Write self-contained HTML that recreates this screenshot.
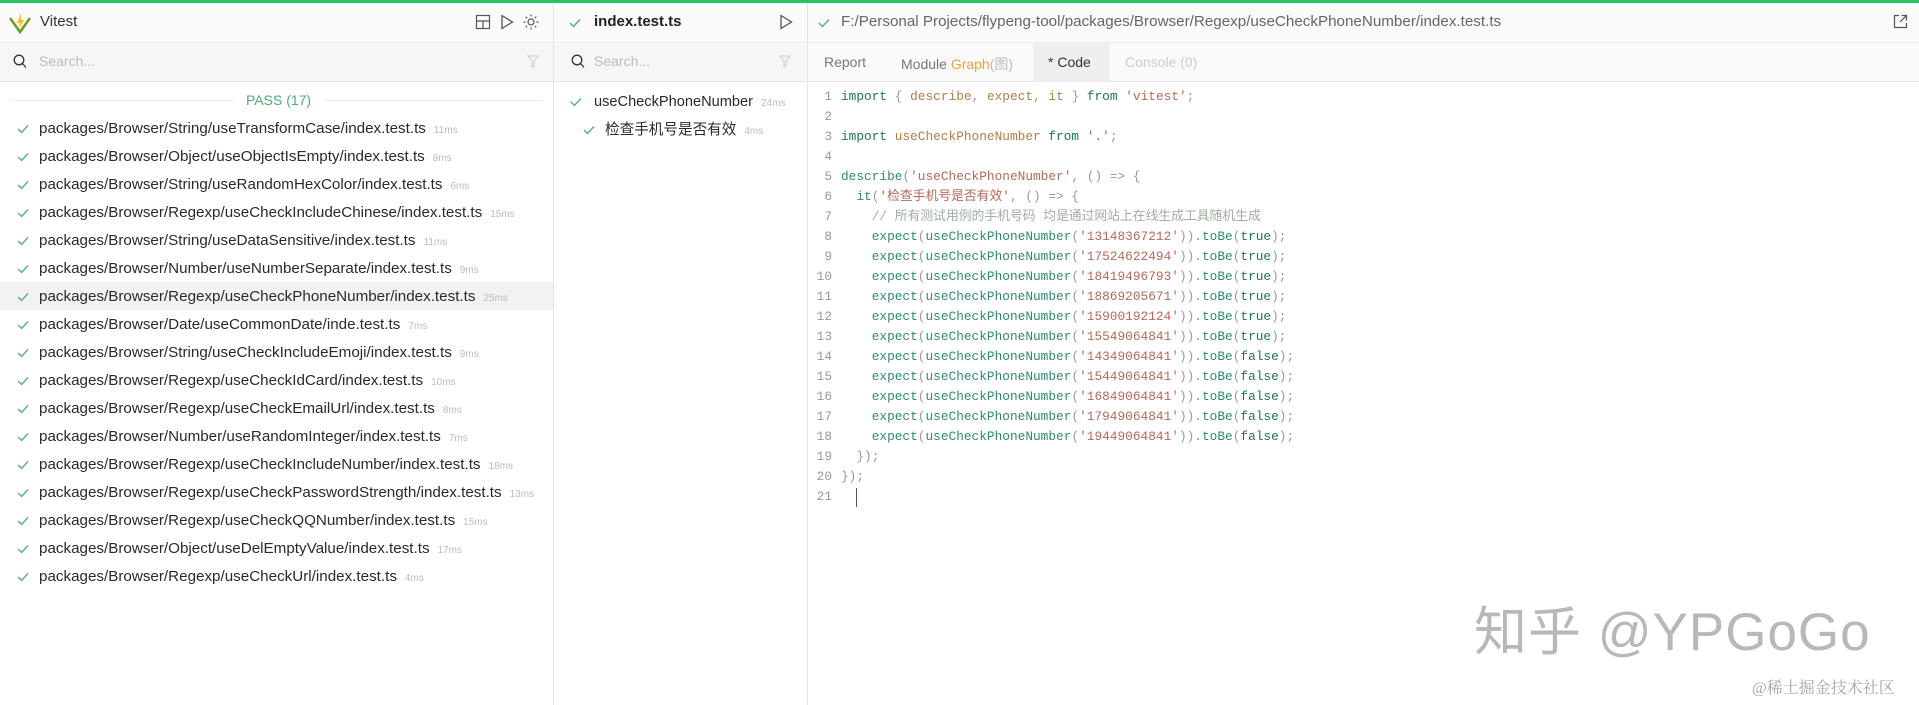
<!DOCTYPE html>
<html><head><meta charset="utf-8"><style>
*{box-sizing:border-box;margin:0;padding:0}
body{width:1919px;height:705px;overflow:hidden;background:#fff;font-family:"Liberation Sans","Noto Sans CJK SC",sans-serif;color:#333;position:relative}
.a{position:absolute;white-space:nowrap}
.top{left:0;top:0;width:1919px;height:3px;background:#22c55e}
.hdr{top:3px;height:40px;background:#fafafa;border-bottom:1px solid #eee}
.srch{top:43px;height:39px;background:#f6f6f6;border-bottom:1px solid #e4e4e4}
.vl{width:1px;background:#e4e4e4;top:3px;height:702px}
.row{font-size:15.2px;color:#2a2a2a}
.ms{font-size:10px;color:#bbb;margin-left:8px}
.code{font-family:"Liberation Mono","Noto Sans CJK SC",monospace;font-size:12.8px;color:#393a34}
.k{color:#1e754f}.f{color:#2f8a73}.s{color:#b56959}.p{color:#999}.c{color:#a0ada0}
.list>div{height:28px;line-height:28px;position:relative;padding-left:39px;overflow:hidden}
.cks{position:absolute;left:17px;top:9px}
</style></head><body>
<svg width="0" height="0" style="position:absolute"><defs><symbol id="ck" viewBox="0 0 12 10"><path d="M1 5 L4.5 8.5 L11 1.5" fill="none" stroke="#4caf72" stroke-width="1.3"/></symbol></defs></svg>
<div class="a top"></div>
<div class="a hdr" style="left:0;width:1919px"></div>
<div class="a srch" style="left:0;width:807px"></div>
<div class="a srch" style="left:807px;width:1112px;background:#fafafa"></div>
<div class="a" style="left:1033px;top:43px;width:77px;height:39px;background:#efefef"></div>
<div class="a vl" style="left:553px"></div>
<div class="a vl" style="left:807px"></div>

<svg class="a" style="left:9px;top:12px" width="22" height="22" viewBox="0 0 22 22"><path d="M1 6 L11 20 L21 6" fill="none" stroke="#6c9a2a" stroke-width="2.5"/><path d="M12 1 L8 11 H11 L10 17 L15 8 H12 Z" fill="#fbbf24"/></svg>
<div class="a" style="left:40px;top:13px;font-size:15px;color:#333">Vitest</div>
<svg class="a" style="left:475px;top:14px" width="16" height="16" viewBox="0 0 16 16" fill="none" stroke="#555" stroke-width="1.2"><rect x="1.5" y="1.5" width="13" height="13"/><path d="M1.5 7h13M8 7v7.5"/></svg>
<svg class="a" style="left:500px;top:14px" width="14" height="16" viewBox="0 0 14 16"><path d="M2 1.5 L12.5 8 L2 14.5 Z" fill="none" stroke="#555" stroke-width="1.3"/></svg>
<svg class="a" style="left:523px;top:14px" width="16" height="16" viewBox="0 0 16 16" stroke="#555" stroke-width="1.2" fill="none"><circle cx="8" cy="8" r="3"/><path d="M8 0.5v2M8 13.5v2M0.5 8h2M13.5 8h2M2.7 2.7l1.4 1.4M11.9 11.9l1.4 1.4M2.7 13.3l1.4-1.4M11.9 4.1l1.4-1.4"/></svg>
<svg class="a" style="left:569px;top:18px" width="12" height="10"><use href="#ck"/></svg>
<div class="a" style="left:594px;top:13px;font-size:15px;font-weight:bold;color:#222">index.test.ts</div>
<svg class="a" style="left:779px;top:14px" width="14" height="16" viewBox="0 0 14 16"><path d="M2 1.5 L12.5 8 L2 14.5 Z" fill="none" stroke="#555" stroke-width="1.3"/></svg>
<svg class="a" style="left:818px;top:18px" width="12" height="10"><use href="#ck"/></svg>
<div class="a" style="left:841px;top:13px;font-size:15.2px;color:#666">F:/Personal Projects/flypeng-tool/packages/Browser/Regexp/useCheckPhoneNumber/index.test.ts</div>
<svg class="a" style="left:1893px;top:14px" width="15" height="15" viewBox="0 0 15 15" fill="none" stroke="#555" stroke-width="1.2"><path d="M6 1.5H1.5v12h12V9M8.5 1.5h5v5M13.5 1.5L7 8"/></svg>

<svg class="a" style="left:13px;top:54px" width="14" height="15" viewBox="0 0 14 15" fill="none" stroke="#333" stroke-width="1.3"><circle cx="6" cy="6" r="4.8"/><path d="M9.5 9.5l3.5 4"/></svg>
<div class="a" style="left:39px;top:53px;font-size:14px;color:#bbb">Search...</div>
<svg class="a" style="left:527px;top:55px" width="14" height="13" viewBox="0 0 14 13" fill="none" stroke="#ccc"><path d="M1 1h10L7 6v5L5 12V6Z"/></svg>
<svg class="a" style="left:571px;top:54px" width="14" height="15" viewBox="0 0 14 15" fill="none" stroke="#333" stroke-width="1.3"><circle cx="6" cy="6" r="4.8"/><path d="M9.5 9.5l3.5 4"/></svg>
<div class="a" style="left:594px;top:53px;font-size:14px;color:#bbb">Search...</div>
<svg class="a" style="left:779px;top:55px" width="14" height="13" viewBox="0 0 14 13" fill="none" stroke="#ccc"><path d="M1 1h10L7 6v5L5 12V6Z"/></svg>

<div class="a" style="left:824px;top:54px;font-size:14px;color:#777">Report</div>
<div class="a" style="left:901px;top:54px;font-size:14px;color:#777">Module <span style="color:#f0a040">Graph</span><span style="color:#bbb">(图)</span></div>
<div class="a" style="left:1048px;top:54px;font-size:14px;color:#333">* Code</div>
<div class="a" style="left:1125px;top:54px;font-size:14px;color:#ccc">Console (0)</div>

<div class="a" style="left:10px;top:100px;width:225px;height:1px;background:#eee"></div>
<div class="a" style="left:323px;top:100px;width:220px;height:1px;background:#eee"></div>
<div class="a" style="left:246px;top:92px;font-size:14px;color:#4caf72">PASS (17)</div>

<div class="a" style="left:0;top:282px;width:553px;height:28px;background:#f2f2f2"></div>
<div class="a list" style="left:0;top:115px;width:553px">
<div><svg class="cks" width="12" height="10"><use href="#ck"/></svg><span class="row">packages/Browser/String/useTransformCase/index.test.ts</span><span class="ms">11ms</span></div>
<div><svg class="cks" width="12" height="10"><use href="#ck"/></svg><span class="row">packages/Browser/Object/useObjectIsEmpty/index.test.ts</span><span class="ms">8ms</span></div>
<div><svg class="cks" width="12" height="10"><use href="#ck"/></svg><span class="row">packages/Browser/String/useRandomHexColor/index.test.ts</span><span class="ms">6ms</span></div>
<div><svg class="cks" width="12" height="10"><use href="#ck"/></svg><span class="row">packages/Browser/Regexp/useCheckIncludeChinese/index.test.ts</span><span class="ms">15ms</span></div>
<div><svg class="cks" width="12" height="10"><use href="#ck"/></svg><span class="row">packages/Browser/String/useDataSensitive/index.test.ts</span><span class="ms">11ms</span></div>
<div><svg class="cks" width="12" height="10"><use href="#ck"/></svg><span class="row">packages/Browser/Number/useNumberSeparate/index.test.ts</span><span class="ms">9ms</span></div>
<div><svg class="cks" width="12" height="10"><use href="#ck"/></svg><span class="row">packages/Browser/Regexp/useCheckPhoneNumber/index.test.ts</span><span class="ms">25ms</span></div>
<div><svg class="cks" width="12" height="10"><use href="#ck"/></svg><span class="row">packages/Browser/Date/useCommonDate/inde.test.ts</span><span class="ms">7ms</span></div>
<div><svg class="cks" width="12" height="10"><use href="#ck"/></svg><span class="row">packages/Browser/String/useCheckIncludeEmoji/index.test.ts</span><span class="ms">9ms</span></div>
<div><svg class="cks" width="12" height="10"><use href="#ck"/></svg><span class="row">packages/Browser/Regexp/useCheckIdCard/index.test.ts</span><span class="ms">10ms</span></div>
<div><svg class="cks" width="12" height="10"><use href="#ck"/></svg><span class="row">packages/Browser/Regexp/useCheckEmailUrl/index.test.ts</span><span class="ms">8ms</span></div>
<div><svg class="cks" width="12" height="10"><use href="#ck"/></svg><span class="row">packages/Browser/Number/useRandomInteger/index.test.ts</span><span class="ms">7ms</span></div>
<div><svg class="cks" width="12" height="10"><use href="#ck"/></svg><span class="row">packages/Browser/Regexp/useCheckIncludeNumber/index.test.ts</span><span class="ms">18ms</span></div>
<div><svg class="cks" width="12" height="10"><use href="#ck"/></svg><span class="row">packages/Browser/Regexp/useCheckPasswordStrength/index.test.ts</span><span class="ms">13ms</span></div>
<div><svg class="cks" width="12" height="10"><use href="#ck"/></svg><span class="row">packages/Browser/Regexp/useCheckQQNumber/index.test.ts</span><span class="ms">15ms</span></div>
<div><svg class="cks" width="12" height="10"><use href="#ck"/></svg><span class="row">packages/Browser/Object/useDelEmptyValue/index.test.ts</span><span class="ms">17ms</span></div>
<div><svg class="cks" width="12" height="10"><use href="#ck"/></svg><span class="row">packages/Browser/Regexp/useCheckUrl/index.test.ts</span><span class="ms">4ms</span></div>
</div>

<div class="a list" style="left:553px;top:88px;width:254px">
<div style="padding-left:41px"><svg class="cks" style="left:17px" width="12" height="10"><use href="#ck"/></svg><span class="row" style="font-size:14.6px">useCheckPhoneNumber</span><span class="ms">24ms</span></div>
<div style="padding-left:52px"><svg class="cks" style="left:30px" width="12" height="10"><use href="#ck"/></svg><span class="row" style="font-size:14.6px">检查手机号是否有效</span><span class="ms">4ms</span></div>
</div>

<div class="a code" style="left:0;top:87px;line-height:20px">
<div style="position:absolute;left:792px;width:40px;text-align:right;color:#999">1<br>2<br>3<br>4<br>5<br>6<br>7<br>8<br>9<br>10<br>11<br>12<br>13<br>14<br>15<br>16<br>17<br>18<br>19<br>20<br>21</div>
<div style="position:absolute;left:841px;white-space:pre"><span class="k">import</span> <span class="p">{</span> <span style="color:#b07d48">describe</span><span class="p">,</span> <span style="color:#b07d48">expect</span><span class="p">,</span> <span style="color:#b07d48">it</span> <span class="p">}</span> <span class="k">from</span> <span class="s">'vitest'</span><span class="p">;</span>

<span class="k">import</span> <span style="color:#b07d48">useCheckPhoneNumber</span> <span class="k">from</span> <span class="s">'.'</span><span class="p">;</span>

<span class="f">describe</span><span class="p">(</span><span class="s">'useCheckPhoneNumber'</span><span class="p">, () =&gt; {</span>
  <span class="f">it</span><span class="p">(</span><span class="s">'检查手机号是否有效'</span><span class="p">, () =&gt; {</span>
    <span class="c">// 所有测试用例的手机号码 均是通过网站上在线生成工具随机生成</span>
    <span class="f">expect</span><span class="p">(</span><span class="f">useCheckPhoneNumber</span><span class="p">(</span><span class="s">'13148367212'</span><span class="p">)).</span><span class="f">toBe</span><span class="p">(</span><span class="k">true</span><span class="p">);</span>
    <span class="f">expect</span><span class="p">(</span><span class="f">useCheckPhoneNumber</span><span class="p">(</span><span class="s">'17524622494'</span><span class="p">)).</span><span class="f">toBe</span><span class="p">(</span><span class="k">true</span><span class="p">);</span>
    <span class="f">expect</span><span class="p">(</span><span class="f">useCheckPhoneNumber</span><span class="p">(</span><span class="s">'18419496793'</span><span class="p">)).</span><span class="f">toBe</span><span class="p">(</span><span class="k">true</span><span class="p">);</span>
    <span class="f">expect</span><span class="p">(</span><span class="f">useCheckPhoneNumber</span><span class="p">(</span><span class="s">'18869205671'</span><span class="p">)).</span><span class="f">toBe</span><span class="p">(</span><span class="k">true</span><span class="p">);</span>
    <span class="f">expect</span><span class="p">(</span><span class="f">useCheckPhoneNumber</span><span class="p">(</span><span class="s">'15900192124'</span><span class="p">)).</span><span class="f">toBe</span><span class="p">(</span><span class="k">true</span><span class="p">);</span>
    <span class="f">expect</span><span class="p">(</span><span class="f">useCheckPhoneNumber</span><span class="p">(</span><span class="s">'15549064841'</span><span class="p">)).</span><span class="f">toBe</span><span class="p">(</span><span class="k">true</span><span class="p">);</span>
    <span class="f">expect</span><span class="p">(</span><span class="f">useCheckPhoneNumber</span><span class="p">(</span><span class="s">'14349064841'</span><span class="p">)).</span><span class="f">toBe</span><span class="p">(</span><span class="k">false</span><span class="p">);</span>
    <span class="f">expect</span><span class="p">(</span><span class="f">useCheckPhoneNumber</span><span class="p">(</span><span class="s">'15449064841'</span><span class="p">)).</span><span class="f">toBe</span><span class="p">(</span><span class="k">false</span><span class="p">);</span>
    <span class="f">expect</span><span class="p">(</span><span class="f">useCheckPhoneNumber</span><span class="p">(</span><span class="s">'16849064841'</span><span class="p">)).</span><span class="f">toBe</span><span class="p">(</span><span class="k">false</span><span class="p">);</span>
    <span class="f">expect</span><span class="p">(</span><span class="f">useCheckPhoneNumber</span><span class="p">(</span><span class="s">'17949064841'</span><span class="p">)).</span><span class="f">toBe</span><span class="p">(</span><span class="k">false</span><span class="p">);</span>
    <span class="f">expect</span><span class="p">(</span><span class="f">useCheckPhoneNumber</span><span class="p">(</span><span class="s">'19449064841'</span><span class="p">)).</span><span class="f">toBe</span><span class="p">(</span><span class="k">false</span><span class="p">);</span>
  <span class="p">});</span>
<span class="p">});</span>
</div></div>
<div class="a" style="left:856px;top:488px;width:1px;height:19px;background:#555"></div>

<div class="a" style="left:1474px;top:590px;font-size:53px;color:#b8b8b8;letter-spacing:1px">知乎 @YPGoGo</div>
<div class="a" style="left:1752px;top:675px;font-size:16px;color:#a5a5a5;font-family:'Liberation Serif','Noto Serif CJK SC',serif">@稀土掘金技术社区</div>
</body></html>
